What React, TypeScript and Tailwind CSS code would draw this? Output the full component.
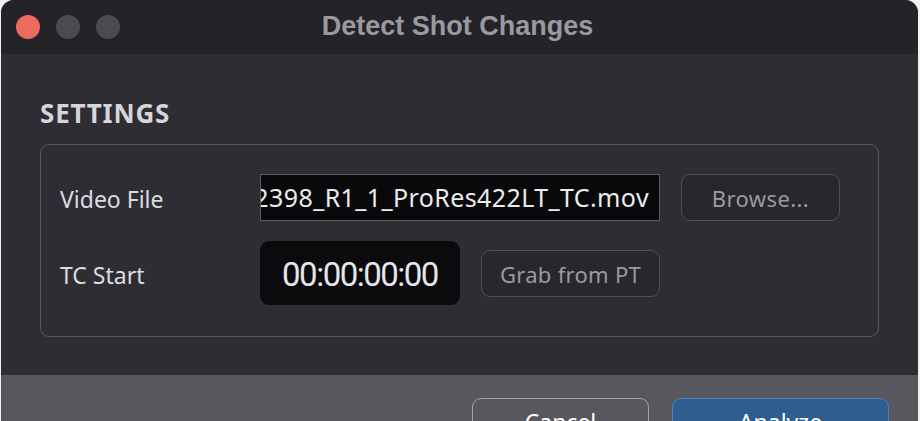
export default function App() {
  return (
    <div className="w-[920px] h-[421px] overflow-hidden bg-[#f2f2f2] pl-[1px] pr-[2px]">
      <div className="h-full flex flex-col rounded-t-[13px] overflow-hidden bg-[#2e2d33] font-['Noto_Sans',sans-serif]">
        {/* Title bar */}
        <div className="relative h-[54px] shrink-0 bg-[#232328] flex items-center">
          <div className="flex items-center gap-[16px] pl-[15px]">
            <span className="w-[24px] h-[24px] rounded-full bg-[#ec6a5e]"></span>
            <span className="w-[24px] h-[24px] rounded-full bg-[#4a4a4f]"></span>
            <span className="w-[24px] h-[24px] rounded-full bg-[#4a4a4f]"></span>
          </div>
          <div className="absolute inset-0 flex items-center justify-center pr-[4px] pb-[2px] font-['Liberation_Sans',sans-serif] font-bold text-[27px] text-[#9a9a9e]">
            Detect Shot Changes
          </div>
        </div>

        {/* Body */}
        <div className="flex-1 pl-[39px] pr-[39px] pt-[43px]">
          <h2 className="text-[26px] leading-[32px] font-bold text-[#d6d6da] tracking-[0.8px]">
            SETTINGS
          </h2>
          <div className="mt-[15px] h-[193px] border-[1.5px] border-[#58575d] rounded-[9px] pl-[19px] pr-[20px] pt-[29px]">
            <div className="flex items-center h-[47px]">
              <span className="w-[200px] text-[23px] text-[#dcdce0] pt-[3px]">Video File</span>
              <div className="w-[400px] h-[47px] bg-[#09090b] border border-[#5c5c62] flex items-center justify-end overflow-hidden pr-[10px]">
                <span className="whitespace-nowrap text-[25px] tracking-[0.4px] text-[#ececef]">
                  2398_R1_1_ProRes422LT_TC.mov
                </span>
              </div>
              <button className="ml-[21px] w-[159px] h-[47px] rounded-[9px] bg-[#28272c] border-[1.5px] border-[#504f55] text-[22px] text-[#9a9a9f] tracking-[0.4px] pt-[2px]">
                Browse...
              </button>
            </div>
            <div className="flex items-center h-[64px] mt-[20px]">
              <span className="w-[200px] text-[23px] text-[#dcdce0] pt-[4px]">TC Start</span>
              <div className="w-[200px] h-[64px] rounded-[9px] bg-[#0b0b0d] flex items-center justify-center font-['Roboto',sans-serif] text-[33px] tracking-[-1.5px] text-[#e6e6ea] pt-[3px]">
                00:00:00:00
              </div>
              <button className="ml-[21px] w-[179px] h-[47px] rounded-[9px] bg-[#28272c] border-[1.5px] border-[#504f55] text-[22px] text-[#9a9a9f] tracking-[0.3px] pt-[3px]">
                Grab from PT
              </button>
            </div>
          </div>
        </div>

        {/* Footer */}
        <div className="h-[46px] shrink-0 bg-[#58575d] flex justify-end gap-[23px] pr-[29px] pt-[23px]">
          <button className="w-[177px] h-[48px] rounded-[9px] border-[1.5px] border-[#a3a2a8] text-[23px] text-white pt-[6px] flex justify-center items-start">
            Cancel
          </button>
          <button className="w-[217px] h-[48px] rounded-[9px] bg-[#2e5e8f] border-[1.5px] border-[#4b82bb] text-[23px] text-white pt-[6px] flex justify-center items-start">
            Analyze
          </button>
        </div>
      </div>
    </div>
  );
}
